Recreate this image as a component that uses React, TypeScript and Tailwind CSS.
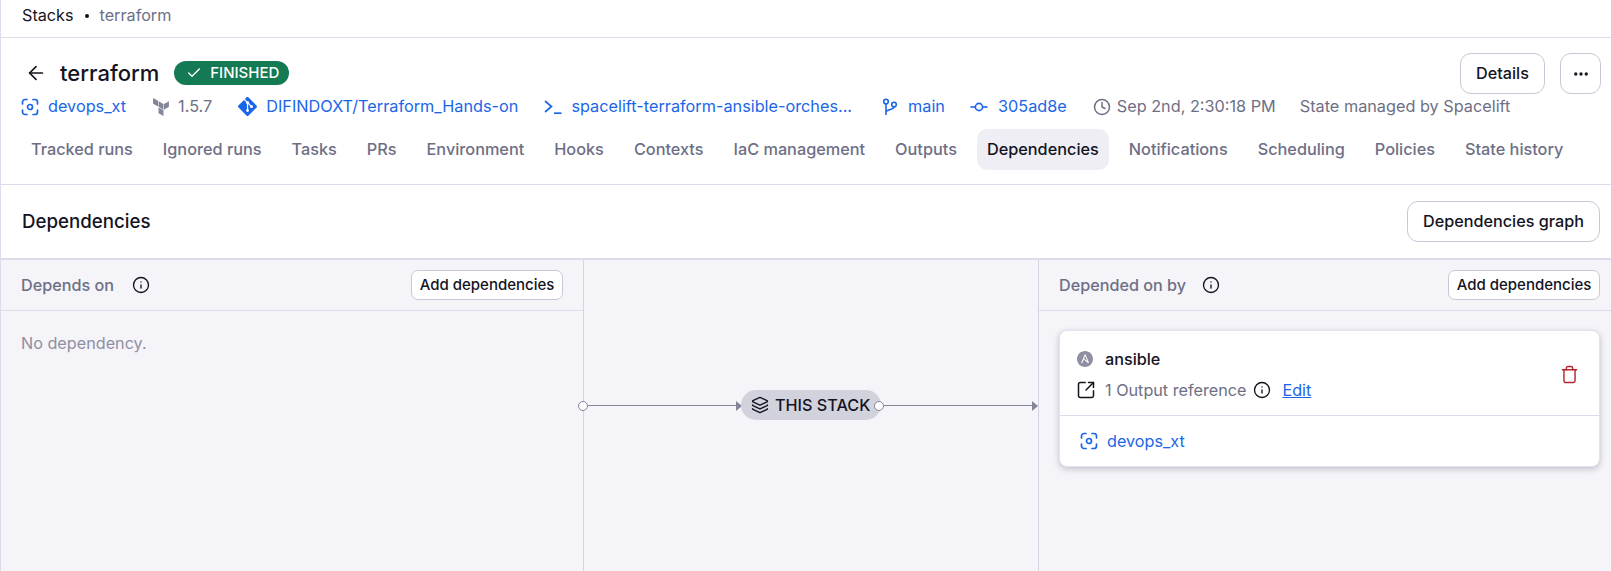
import React from "react";
import { ArrowLeft, Check, Clock, Info, Layers, SquareArrowOutUpRight, Trash, Ellipsis } from "lucide-react";
import { SiGit, SiTerraform, SiAnsible } from "react-icons/si";

function SpaceIcon({ className }: { className?: string }) {
  return (
    <svg viewBox="0 0 18 18" fill="none" stroke="currentColor" strokeWidth="1.7" strokeLinecap="round" className={className}>
      <path d="M6 1.5H4A2.5 2.5 0 0 0 1.500 4V6" />
      <path d="M12 1.500H14A2.500 2.500 0 0 1 16.500 4V6" />
      <path d="M6 16.500H4A2.500 2.500 0 0 1 1.500 14V12" />
      <path d="M12 16.500H14A2.500 2.500 0 0 0 16.500 14V12" />
      <circle cx="9" cy="9" r="2.500" />
    </svg>
  );
}

function PromptIcon({ className }: { className?: string }) {
  return (
    <svg viewBox="0 0 18 16" fill="none" stroke="currentColor" strokeWidth="1.700" className={className}>
      <path d="M1 2L7.500 7.500L1 13" />
      <path d="M10 14.200H17.500" />
    </svg>
  );
}

function BranchIcon({ className }: { className?: string }) {
  return (
    <svg viewBox="0 0 16 18" fill="none" stroke="currentColor" strokeWidth="1.600" className={className}>
      <circle cx="4" cy="3.500" r="2.300" />
      <circle cx="12" cy="6.500" r="2.300" />
      <path d="M4 5.800V17" />
      <path d="M12 8.800C12 11.500 6.500 11 4 13.500" />
    </svg>
  );
}

function CommitIcon({ className }: { className?: string }) {
  return (
    <svg viewBox="0 0 18 18" fill="none" stroke="currentColor" strokeWidth="1.600" className={className}>
      <circle cx="9" cy="9" r="3.600" />
      <path d="M0.500 9H5.400" />
      <path d="M12.600 9H17.500" />
    </svg>
  );
}

const tabs = ["Tracked runs", "Ignored runs", "Tasks", "PRs", "Environment", "Hooks", "Contexts", "IaC management", "Outputs", "Dependencies", "Notifications", "Scheduling", "Policies", "State history"];

function AddButton() {
  return (
    <button className="h-[30px] w-[152px] rounded-[7px] border border-[#c9c8d6] bg-white text-[15px] font-[450] text-[#14141f]">
      Add dependencies
    </button>
  );
}

function Port({ className }: { className?: string }) {
  return <span className={`absolute w-[10px] h-[10px] rounded-full bg-white border border-[#85859a] ${className}`} />;
}

export default function App() {
  return (
    <div className="w-[1611px] h-[571px] overflow-hidden bg-white border-l border-[#dddcea] flex flex-col text-[16.200px] text-[#14141f]" style={{ fontFamily: "Inter, sans-serif" }}>
      <div className="h-[38px] shrink-0 border-b border-[#dddcea] flex items-center pl-[21px] pb-[6px] gap-[11px]">
        <span>Stacks</span>
        <span className="w-[4px] h-[4px] rounded-full bg-[#14141f]" />
        <span className="text-[#6e6f85]">terraform</span>
      </div>

      <div className="h-[147px] shrink-0 border-b border-[#dddcea] flex flex-col relative">
        <div className="flex items-center pl-[24px] pt-[20px] h-[50px]">
          <ArrowLeft size={22} strokeWidth={1.800} />
          <span className="ml-[13px] text-[22px] font-medium leading-[26px]">terraform</span>
          <span className="ml-[15px] h-[24px] w-[115px] rounded-full bg-[#137a53] text-white text-[15px] font-medium flex items-center justify-center gap-[8px] pl-[2px]">
            <Check size={16} strokeWidth={2} />
            FINISHED
          </span>
        </div>
        <div className="absolute right-[10px] top-[15px] flex gap-[15px]">
          <button className="h-[41px] w-[85px] rounded-[11px] border border-[#c9c8d6] font-[450]">Details</button>
          <button className="h-[41px] w-[41px] rounded-[11px] border border-[#c9c8d6] flex items-center justify-center"><Ellipsis size={18} strokeWidth={2.500} /></button>
        </div>

        <div className="flex items-center h-[25px] mt-[6px] pl-[20px] text-[16.250px] text-[#1a66e8] whitespace-nowrap">
          <SpaceIcon className="w-[18px] h-[18px]" />
          <span className="ml-[9px]">devops_xt</span>
          <SiTerraform size={18} className="ml-[26px] text-[#85859a]" />
          <span className="ml-[8px] text-[#6e6f85]">1.5.7</span>
          <SiGit size={19} className="ml-[26px]" />
          <span className="ml-[9px]">DIFINDOXT/Terraform_Hands-on</span>
          <PromptIcon className="ml-[26px] w-[18px] h-[16px]" />
          <span className="ml-[9px]">spacelift-terraform-ansible-orches...</span>
          <BranchIcon className="ml-[30px] w-[16px] h-[18px]" />
          <span className="ml-[10px]">main</span>
          <CommitIcon className="ml-[25px] w-[18px] h-[18px]" />
          <span className="ml-[10px]">305ad8e</span>
          <Clock size={18} className="ml-[26px] text-[#6e6f85]" />
          <span className="ml-[6px] text-[#6e6f85]">Sep 2nd, 2:30:18 PM</span>
          <span className="ml-[24px] text-[#6e6f85]">State managed by Spacelift</span>
        </div>

        <div className="flex items-center mt-[10px] pl-[20px] gap-[10px] text-[16.280px]">
          {tabs.map((t) => (
            <span key={t} className={`h-[41px] px-[10px] rounded-[10px] flex items-center font-[450] whitespace-nowrap ${t === "Dependencies" ? "bg-[#efeef5] text-[#14141f]" : "text-[#6e6f85]"}`}>
              {t}
            </span>
          ))}
        </div>
      </div>

      <div className="h-[75px] shrink-0 border-b-2 border-[#dddcea] flex items-center justify-between pl-[21px] pr-[11px]">
        <span className="text-[18.700px] font-[450] pt-[2px]">Dependencies</span>
        <button className="h-[41px] w-[193px] rounded-[11px] border border-[#c9c8d6] font-[450]">Dependencies graph</button>
      </div>

      <div className="flex-1 flex bg-[#f4f4f9] relative">
        <div className="w-[583px] shrink-0 border-r border-[#d5d4e3]">
          <div className="h-[51px] border-b border-[#dddcea] flex items-center justify-between pl-[20px] pr-[20px]">
            <div className="flex items-center gap-[18px]">
              <span className="font-[450] text-[#6e6f85]">Depends on</span>
              <Info size={18} strokeWidth={1.800} className="text-[#14141f]" />
            </div>
            <AddButton />
          </div>
          <div className="pl-[20px] pt-[20px] text-[#8f8fa3]">No dependency.</div>
        </div>

        <div className="w-[455px] shrink-0 border-r border-[#d5d4e3]" />

        <div className="flex-1 min-w-0">
          <div className="h-[51px] border-b border-[#dddcea] flex items-center justify-between pl-[20px] pr-[11px]">
            <div className="flex items-center gap-[16px]">
              <span className="font-[450] text-[#6e6f85]">Depended on by</span>
              <Info size={18} strokeWidth={1.800} className="text-[#14141f]" />
            </div>
            <AddButton />
          </div>
          <div className="ml-[20px] mr-[11px] mt-[19px] bg-white rounded-[8px] border border-[#e3e2ee] shadow-[0_2px_6px_rgba(40,40,70,0.25)]">
            <div className="h-[85px] border-b border-[#dddcea] flex items-center justify-between pl-[16px] pr-[20px]">
              <div className="flex flex-col gap-[7px] pt-[3px]">
                <div className="flex items-center gap-[12px] pl-[1px]">
                  <SiAnsible size={16} className="text-[#8f8fa3]" />
                  <span className="font-[450]">ansible</span>
                </div>
                <div className="flex items-center">
                  <SquareArrowOutUpRight size={20} strokeWidth={1.800} className="text-[#14141f]" />
                  <span className="ml-[9px] text-[#6e6f85]">1 Output reference</span>
                  <Info size={18} strokeWidth={1.800} className="ml-[7px]" />
                  <span className="ml-[11px] text-[#1a66e8] underline">Edit</span>
                </div>
              </div>
              <Trash size={19} strokeWidth={1.800} className="text-[#b3262e] mt-[2px]" />
            </div>
            <div className="h-[50px] flex items-center pl-[20px] text-[#1a66e8]">
              <SpaceIcon className="w-[18px] h-[18px]" />
              <span className="ml-[9px]">devops_xt</span>
            </div>
          </div>
        </div>

        <div className="absolute left-[577px] top-[145px] w-[459px] h-[1px] bg-[#85859a]" />
        <Port className="left-[577px] top-[141px]" />
        <div className="absolute left-[735px] top-[141px] w-0 h-0 border-y-[5px] border-y-transparent border-l-[6px] border-l-[#85859a]" />
        <div className="absolute left-[1031px] top-[141px] w-0 h-0 border-y-[5px] border-y-transparent border-l-[6px] border-l-[#85859a]" />
        <div className="absolute left-[740px] top-[130px] w-[140px] h-[30px] rounded-full bg-[#d2d2dc] flex items-center pl-[10px] gap-[6px] text-[#14141f]">
          <Layers size={18} strokeWidth={1.800} />
          <span className="font-[450]">THIS STACK</span>
        </div>
        <Port className="left-[873px] top-[141px]" />
      </div>
    </div>
  );
}
